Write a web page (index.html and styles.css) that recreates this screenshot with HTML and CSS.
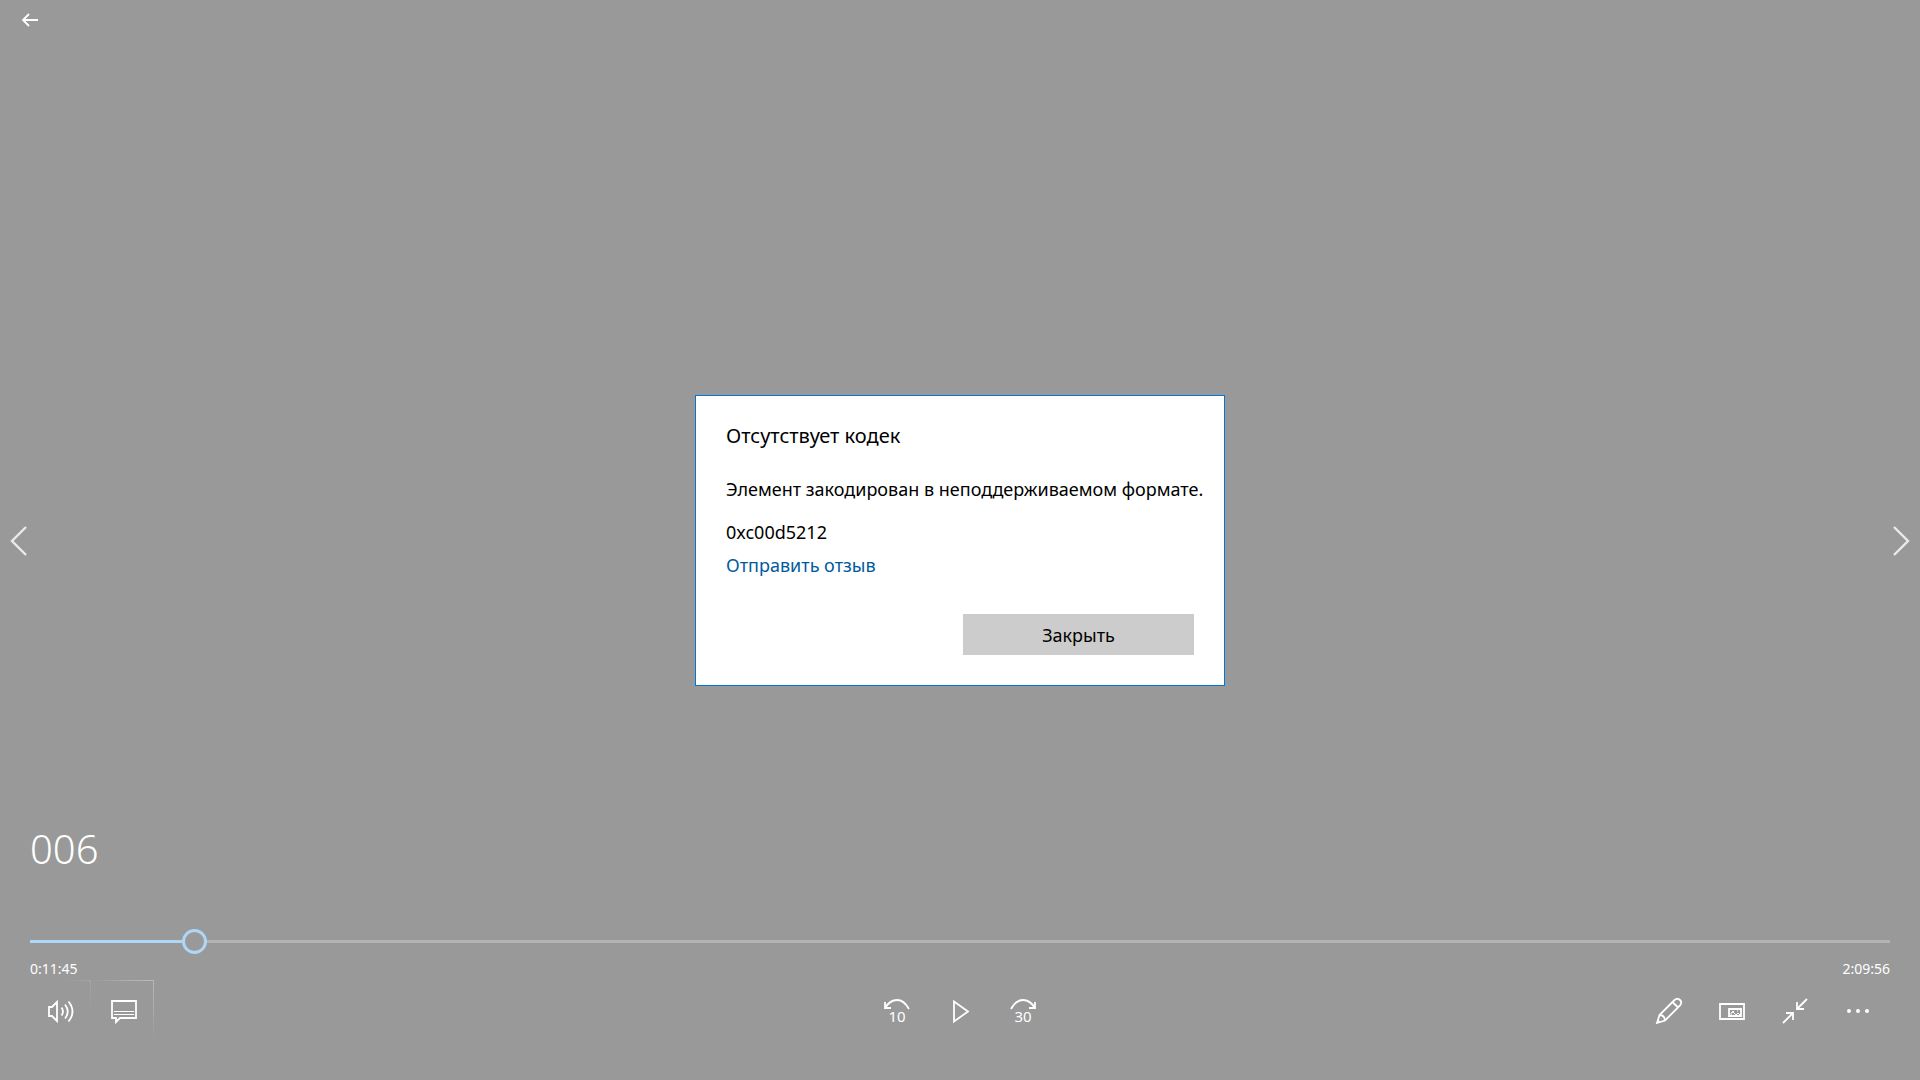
FILE: index.html
```html
<!DOCTYPE html>
<html lang="ru">
<head>
  <meta charset="UTF-8" />
  <meta name="viewport" content="width=device-width, initial-scale=1" />
  <title>006</title>
  <link rel="stylesheet" href="styles.css">
</head>
<body>
  <header class="topbar">
    <button class="back" aria-label="Назад">
      <svg width="18" height="16" viewBox="0 0 18 16"><path d="M17 8H2M8 2L2 8l6 6" /></svg>
    </button>
  </header>

  <main class="stage">
    <button class="nav" aria-label="Предыдущий">
      <svg width="18" height="30" viewBox="0 0 18 30"><path d="M16 1L2 15l14 14" /></svg>
    </button>

    <div class="dialog" role="dialog" aria-labelledby="dialog-title">
      <h2 id="dialog-title">Отсутствует кодек</h2>
      <p class="message">Элемент закодирован в неподдерживаемом формате.</p>
      <p class="code">0xc00d5212</p>
      <a href="#">Отправить отзыв</a>
      <button class="btn">Закрыть</button>
    </div>

    <button class="nav" aria-label="Следующий">
      <svg width="18" height="30" viewBox="0 0 18 30"><path d="M2 1l14 14L2 29" /></svg>
    </button>
  </main>

  <footer class="player">
    <h1>006</h1>
    <input type="range" class="seek" min="0" max="7796" value="644" style="--played: 8.8%" aria-label="Позиция" />
    <div class="times">
      <span>0:11:45</span>
      <span>2:09:56</span>
    </div>

    <div class="controls">
      <div class="group">
        <button class="control lit-edge" aria-label="Громкость">
          <svg width="28" height="28" viewBox="0 0 28 28">
            <path d="M2 10h3l5-5v19l-5-5H2z" />
            <path d="M14.500 10.500q3 4 0 8M18 7.500q5.500 7 0 14M21.500 4.500q8 10 0 20" />
          </svg>
        </button>
        <button class="control lit" aria-label="Субтитры">
          <svg width="28" height="28" viewBox="0 0 28 28">
            <path d="M2 4h24v17H10l-4 4v-4H2z" />
            <path class="thin" d="M4 14.500h20M4 17.500h20" />
          </svg>
        </button>
      </div>

      <div class="group">
        <button class="control" aria-label="Назад на 10 секунд">
          <svg width="28" height="36" viewBox="0 0 28 36">
            <path d="M2 9v6h6M2 15Q7 7 14 7T26 16" />
            <text x="14" y="29">10</text>
          </svg>
        </button>
        <button class="control" aria-label="Воспроизвести">
          <svg width="28" height="28" viewBox="0 0 28 28"><path d="M8 4.500v20L22 14.500z" /></svg>
        </button>
        <button class="control" aria-label="Вперед на 30 секунд">
          <svg width="28" height="36" viewBox="0 0 28 36">
            <path d="M26 9v6h-6M26 15Q21 7 14 7T2 16" />
            <text x="14" y="29">30</text>
          </svg>
        </button>
      </div>

      <div class="group">
        <button class="control" aria-label="Изменить">
          <svg width="28" height="28" viewBox="0 0 28 28">
            <path d="M2 26l2.500-8L19.500 3q3-2.500 5.500 0t0 5.500L10 23.500zM17.500 5l5.500 5.500M4.500 18q5 0 5.500 5.500" />
            <path class="fill" d="M2 26l1-3.500 2.500 2.500z" />
          </svg>
        </button>
        <button class="control" aria-label="Мини-режим">
          <svg width="28" height="28" viewBox="0 0 28 28">
            <path d="M2 7h24v15H2z" />
            <path d="M11 12h12v7H11z" />
            <path class="thin" d="M14 14.500h2M13 18v-2l2-1 3 3 2-2 2 2M19 14h1" />
          </svg>
        </button>
        <button class="control" aria-label="Выйти из полноэкранного режима">
          <svg width="28" height="28" viewBox="0 0 28 28">
            <path d="M26 2L16 12M16 5v7h7M2 26l10-10M5 16h7v7" />
          </svg>
        </button>
        <button class="control" aria-label="Еще">
          <svg width="28" height="28" viewBox="0 0 28 28">
            <circle cx="5" cy="14" r="2" /><circle cx="14" cy="14" r="2" /><circle cx="23" cy="14" r="2" />
          </svg>
        </button>
      </div>
    </div>
  </footer>
</body>
</html>
```
FILE: styles.css
```css
* {
  box-sizing: border-box;
}

body {
  margin: 0;
  min-height: 100vh;
  display: flex;
  flex-direction: column;
  justify-content: space-between;
  background: #999;
  color: #fff;
  font-family: 'Noto Sans', 'Open Sans', sans-serif;
}

h1, h2, p {
  margin: 0;
  font-weight: 400;
}

button {
  border: none;
  padding: 0;
  background: none;
  color: inherit;
  font-family: inherit;
}

svg {
  display: block;
  fill: none;
  stroke: #fff;
  stroke-width: 1.8;
}

svg text, svg circle, svg .fill {
  fill: #fff;
  stroke: none;
}

svg text {
  font-size: 15px;
  text-anchor: middle;
}

svg .thin {
  stroke-width: 1;
}

.back {
  display: flex;
  align-items: center;
  justify-content: center;
  width: 60px;
  height: 40px;
}

/* the dialog and the side arrows lie over the whole player */
.stage {
  position: absolute;
  inset: 0;
  display: flex;
  align-items: center;
  justify-content: space-between;
  padding: 1px 10px 0;
  pointer-events: none;
}

.stage button, .stage a {
  pointer-events: auto;
}

.nav svg {
  stroke: #ebebeb;
  stroke-width: 2.400;
}

.dialog {
  display: flex;
  flex-direction: column;
  align-items: flex-start;
  width: 530px;
  padding: 24px 30px 30px;
  border: 1px solid #0078d7;
  background: #fff;
  color: #000;
  font-size: 18px;
  line-height: 24px;
}

.dialog h2 {
  font-size: 20px;
  line-height: 32px;
}

.message {
  margin-top: 25px;
  white-space: nowrap;
}

.code {
  margin-top: 19px;
}

.dialog a {
  margin-top: 9px;
  color: #005a9e;
  text-decoration: none;
}

.btn {
  align-self: flex-end;
  width: 231px;
  height: 41px;
  margin-top: 37px;
  background: #ccc;
  font-size: 18px;
}

.player {
  padding: 0 30px 38px;
}

.player h1 {
  font-size: 40px;
  font-weight: 300;
  line-height: 56px;
}

.seek {
  appearance: none;
  display: block;
  width: 100%;
  height: 25px;
  margin: 52px 0 0;
  background: none;
}

.seek::-webkit-slider-runnable-track {
  height: 3px;
  background: linear-gradient(to right, #b0d6f7 var(--played), #b3b3b3 var(--played));
}

.seek::-webkit-slider-thumb {
  appearance: none;
  width: 25px;
  height: 25px;
  margin-top: -11px;
  border: 3px solid #b0d6f7;
  border-radius: 50%;
  background: #999;
}

.times {
  display: flex;
  justify-content: space-between;
  margin-top: 4px;
  font-size: 14px;
  line-height: 22px;
}

.controls {
  display: grid;
  grid-template-columns: 1fr auto 1fr;
  padding: 0 2px 0 1px;
}

.group {
  display: flex;
  gap: 3px;
}

.group:last-child {
  justify-content: flex-end;
}

.control {
  position: relative;
  display: flex;
  align-items: center;
  justify-content: center;
  width: 60px;
  height: 62px;
}

/* border that glows near the pointer */
.lit::before, .lit-edge::before {
  content: '';
  position: absolute;
  inset: 0;
  border: 1px solid #bbb;
  mask-image: radial-gradient(circle at 90% 0, #000, transparent 60px);
}

.lit-edge::before {
  border-color: #a6a6a6;
  mask-image: radial-gradient(circle at 100% 0, #000, transparent 30px);
}
```
